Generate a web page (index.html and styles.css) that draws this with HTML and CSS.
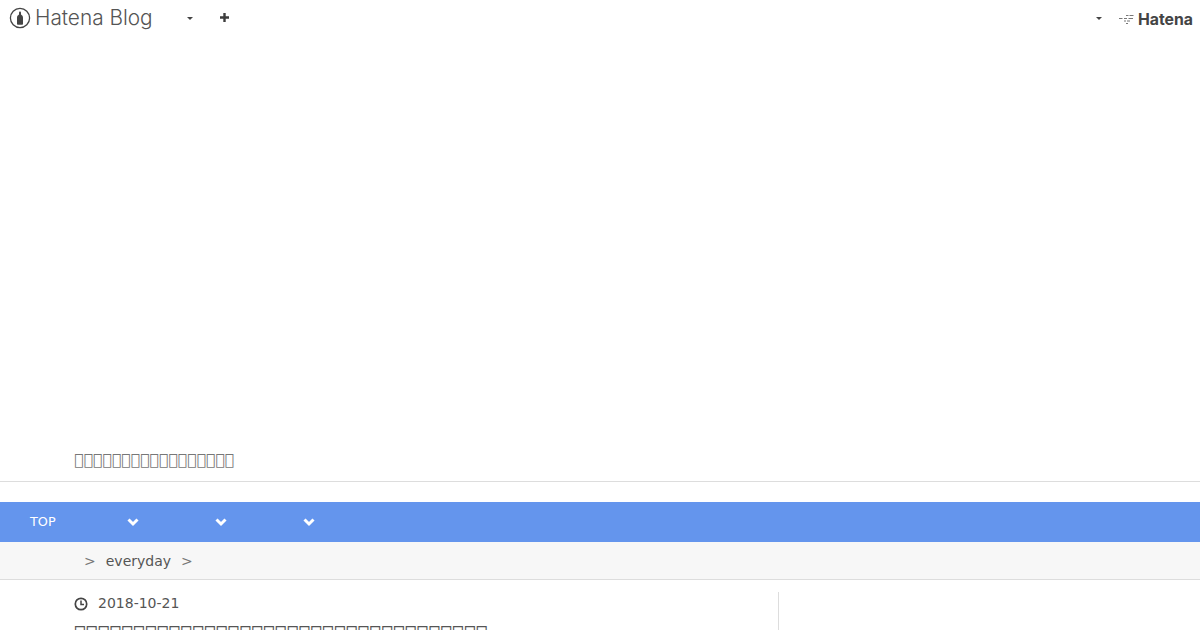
FILE: index.html

```html
<!DOCTYPE html>
<html lang="ja">
<head>
  <meta charset="UTF-8">
  <title>Hatena Blog</title>
  <link rel="stylesheet" href="styles.css">
</head>
<body>
  <div class="navbar">
    <div class="navbar-left">
      <svg class="logo-mark" width="22" height="22" viewBox="0 0 22 22">
        <circle cx="11" cy="11" r="9.6" fill="none" stroke="#444" stroke-width="1.3"/>
        <path d="M11 4.5c.8 0 1 .6 1 1.600v1.400c1.300.8 2 1.800 2 3.200v6.300c0 .5-.3.8-.8.8H8.800c-.5 0-.8-.3-.8-.8v-6.300c0-1.400.7-2.400 2-3.200V6.100c0-1 .2-1.600 1-1.600z" fill="#444"/>
      </svg>
      <span class="logo-text">Hatena Blog</span>
      <span class="caret caret-blog"></span>
      <svg class="plus" width="11" height="11" viewBox="0 0 11 11"><path d="M5.500 1v9M1 5.500h9" stroke="#3d3d3d" stroke-width="2.400" fill="none"/></svg>
    </div>
    <div class="navbar-right">
      <span class="caret"></span>
      <svg class="hatena-mark" width="16" height="12" viewBox="0 0 16 12">
        <path d="M7 3.500h2.500M10.500 3.500h4M0 6.500h3.500M5 6.500h3M9.500 6.500h4.500M5 9h2M8 9h3M7 11.500h2" stroke="#777" stroke-width="1" fill="none"/>
      </svg>
      <span class="hatena-text">Hatena</span>
    </div>
  </div>

  <header class="blog-header">
    <div class="blog-title">&#xE000;&#xE000;&#xE000;&#xE000;&#xE000;&#xE000;&#xE000;&#xE000;&#xE000;&#xE000;&#xE000;&#xE000;&#xE000;&#xE000;&#xE000;&#xE000;&#xE000;</div>
  </header>

  <nav class="menu">
    <span class="menu-top">TOP</span>
    <svg class="chev" width="12" height="9" viewBox="0 0 12 9"><path d="M1.500 1.500 6 6l4.500-4.500" fill="none" stroke="#fff" stroke-width="3"/></svg>
    <svg class="chev" width="12" height="9" viewBox="0 0 12 9"><path d="M1.500 1.500 6 6l4.500-4.500" fill="none" stroke="#fff" stroke-width="3"/></svg>
    <svg class="chev" width="12" height="9" viewBox="0 0 12 9"><path d="M1.500 1.500 6 6l4.500-4.500" fill="none" stroke="#fff" stroke-width="3"/></svg>
  </nav>

  <div class="crumbs">
    <span class="sep">&gt;</span>
    <span class="crumb">everyday</span>
    <span class="sep">&gt;</span>
  </div>

  <main class="content">
    <article class="entry">
      <div class="entry-date">
        <svg class="clock" width="14" height="14" viewBox="0 0 14 14">
          <circle cx="7" cy="7" r="5.700" fill="none" stroke="#444" stroke-width="1.700"/>
          <path d="M7 3.500V7.500H10" fill="none" stroke="#444" stroke-width="1.500"/>
        </svg>
        <span>2018-10-21</span>
      </div>
      <h1 class="entry-title">&#xE000;&#xE000;&#xE000;&#xE000;&#xE000;&#xE000;&#xE000;&#xE000;&#xE000;&#xE000;&#xE000;&#xE000;&#xE000;&#xE000;&#xE000;&#xE000;&#xE000;&#xE000;&#xE000;&#xE000;&#xE000;&#xE000;&#xE000;&#xE000;&#xE000;&#xE000;&#xE000;&#xE000;&#xE000;&#xE000;&#xE000;&#xE000;&#xE000;&#xE000;&#xE000;</h1>
    </article>
    <aside class="side"></aside>
  </main>
</body>
</html>
```

FILE: styles.css

```css
html, body {
  height: 630px;
  overflow: hidden;
}
body {
  margin: 0;
  font-family: "DejaVu Sans", sans-serif;
  color: #555;
  background-color: #fff;
}
.navbar {
  display: flex;
  justify-content: space-between;
  align-items: center;
  height: 36px;
  padding: 0 7px 0 9px;
}
.navbar-left, .navbar-right {
  display: flex;
  align-items: center;
}
.logo-mark {
  margin-right: 4px;
}
.logo-text {
  font-family: Inter, sans-serif;
  font-weight: 300;
  font-size: 20.800px;
  line-height: 36px;
  color: #555;
  width: 152px;
}
.caret {
  width: 0;
  height: 0;
  border-left: 3px solid transparent;
  border-right: 3px solid transparent;
  border-top: 3px solid #444;
}
.plus {
  margin-left: 26px;
  margin-bottom: 1px;
}
.navbar-right .caret {
  margin-right: 17px;
}
.hatena-mark {
  margin-right: 3px;
}
.hatena-text {
  font-family: Inter, sans-serif;
  font-weight: 700;
  font-size: 15.800px;
  color: #444;
  margin-top: 3px;
}
.blog-header {
  height: 446px;
  box-sizing: border-box;
  display: flex;
  align-items: flex-end;
  padding: 0 74px 9px;
  border-bottom: 1px solid #ddd;
}
.blog-title {
  font-size: 15.700px;
  line-height: 24px;
  color: #777;
}
.menu {
  display: flex;
  align-items: center;
  height: 40px;
  margin-top: 20px;
  padding-left: 30px;
  background-color: #6495ed;
  color: #fff;
  font-size: 12.800px;
}
.menu-top {
  width: 97px;
  padding-bottom: 2px;
}
.chev {
  margin-right: 76px;
}
.crumbs {
  display: flex;
  align-items: center;
  gap: 10px;
  height: 37px;
  padding-left: 84px;
  background-color: #f7f7f7;
  border-bottom: 1px solid #ddd;
  font-size: 14px;
}
.sep {
  color: #777;
}
.content {
  display: flex;
  padding: 12px 0 0 74px;
}
.entry {
  width: 704px;
  box-sizing: border-box;
}
.entry-date {
  display: flex;
  align-items: center;
  gap: 10px;
  font-size: 14px;
  line-height: 22px;
}
.clock {
  margin-top: 2px;
}
.entry-title {
  margin: 7px 0 0;
  font-size: 19.700px;
  font-weight: normal;
  line-height: 26px;
}
.side {
  border-left: 1px solid #ddd;
  height: 60px;
}
```
